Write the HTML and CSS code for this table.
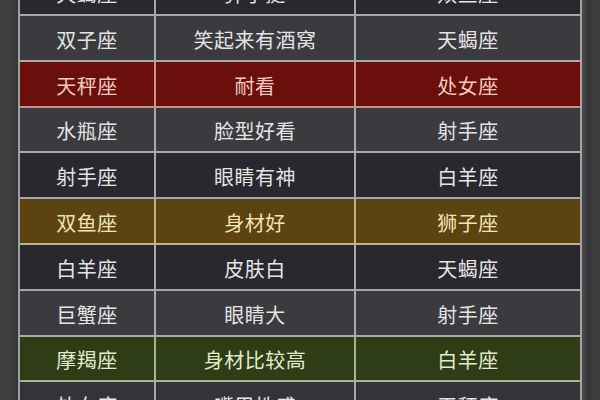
FILE: index.html
```html
<!DOCTYPE html>
<html lang="zh">
<head>
<meta charset="utf-8">
<link rel="stylesheet" href="styles.css">
</head>
<body>
<div class="page">
  <div class="band band-left"></div>
  <div class="table">
    <div class="row dark"><div class="cell">天蝎座</div><div class="cell">鼻子挺</div><div class="cell">双鱼座</div></div>
    <div class="row gray"><div class="cell">双子座</div><div class="cell">笑起来有酒窝</div><div class="cell">天蝎座</div></div>
    <div class="row red"><div class="cell">天秤座</div><div class="cell">耐看</div><div class="cell">处女座</div></div>
    <div class="row gray"><div class="cell">水瓶座</div><div class="cell">脸型好看</div><div class="cell">射手座</div></div>
    <div class="row dark"><div class="cell">射手座</div><div class="cell">眼睛有神</div><div class="cell">白羊座</div></div>
    <div class="row gold"><div class="cell">双鱼座</div><div class="cell">身材好</div><div class="cell">狮子座</div></div>
    <div class="row dark"><div class="cell">白羊座</div><div class="cell">皮肤白</div><div class="cell">天蝎座</div></div>
    <div class="row gray"><div class="cell">巨蟹座</div><div class="cell">眼睛大</div><div class="cell">射手座</div></div>
    <div class="row green"><div class="cell">摩羯座</div><div class="cell">身材比较高</div><div class="cell">白羊座</div></div>
    <div class="row gray2"><div class="cell">处女座</div><div class="cell">嘴巴性感</div><div class="cell">天秤座</div></div>
  </div>
  <div class="band band-right"></div>
</div>
</body>
</html>
```
FILE: styles.css
```css
html, body {
  margin: 0;
  padding: 0;
  background: #3c3c3e;
  overflow: hidden;
}
.page {
  display: flex;
  width: 600px;
  height: 400px;
  overflow: hidden;
}
.band-left {
  width: 18px;
  flex: none;
  background: linear-gradient(to right, #404040 0, #3c3c3c 14px, #333 18px);
}
.band-right {
  flex: 1;
  background: linear-gradient(to right, #4a4a4c 0, #3a3a3c 5px, #343436 7px, #3e3e40 10px, #3c3c3e 100%);
}
.table {
  width: 560px;
  flex: none;
  border-left: 2px solid #a0a0a0;
  border-right: 2px solid #a4a4a4;
  margin-top: -29.8px;
  font-family: "Noto Sans CJK SC", "Noto Sans", sans-serif;
  font-size: 20px;
  letter-spacing: 0.5px;
  color: #e4e4e4;
}
.row {
  display: grid;
  grid-template-columns: 136px 200px 1fr;
  height: 45.8px;
  box-sizing: border-box;
  border-bottom: 2px solid rgba(220, 220, 220, 0.7);
}
.cell {
  display: flex;
  align-items: center;
  justify-content: center;
  padding-top: 3px;
  border-right: 2px solid rgba(220, 220, 220, 0.7);
}
.cell:last-child {
  border-right: none;
}
.dark { background: #29282e; }
.gray { background: #3b3b3f; }
.gray2 { background: #343337; }
.red { background: #6b0f0c; color: #f2c9c0; }
.red, .red .cell { border-color: rgba(240, 200, 195, 0.7); }
.gold { background: #5c4412; color: #f2e2b8; }
.gold, .gold .cell { border-color: rgba(235, 225, 190, 0.7); }
.green { background: #2f3d17; color: #e2ebcc; }
.green, .green .cell { border-color: rgba(220, 232, 200, 0.7); }
```
